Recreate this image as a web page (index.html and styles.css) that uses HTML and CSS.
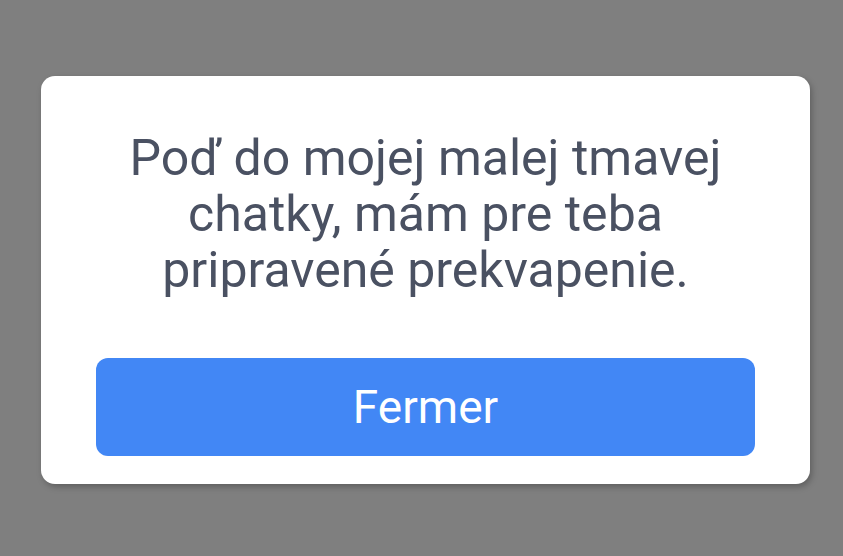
FILE: index.html
```html
<!DOCTYPE html>
<html lang="sk">
<head>
<meta charset="utf-8">
<link rel="stylesheet" href="styles.css">
</head>
<body>
<div class="dialog">
  <p class="message">Poď do mojej malej tmavej chatky, mám pre teba pripravené prekvapenie.</p>
  <button class="btn">Fermer</button>
</div>
</body>
</html>
```
FILE: styles.css
```css
html, body {
  margin: 0;
  height: 100%;
}
body {
  background: #7f7f7f;
  font-family: Roboto, "Noto Sans", sans-serif;
  padding: 76px 0 0 41px;
  box-sizing: border-box;
}
.dialog {
  width: 769px;
  box-sizing: border-box;
  background: #ffffff;
  border-radius: 14px;
  box-shadow: 2px 3px 6px rgba(0,0,0,0.25);
  padding: 54px 55px 28px;
  display: flex;
  flex-direction: column;
}
.message {
  margin: 0 0 60px;
  text-align: center;
  color: #4a5162;
  font-size: 50px;
  line-height: 56px;
}
.btn {
  height: 98px;
  border: none;
  border-radius: 12px;
  background: #4287f5;
  color: #ffffff;
  font-family: Roboto, "Noto Sans", sans-serif;
  font-size: 46px;
  padding: 0;
}
```
